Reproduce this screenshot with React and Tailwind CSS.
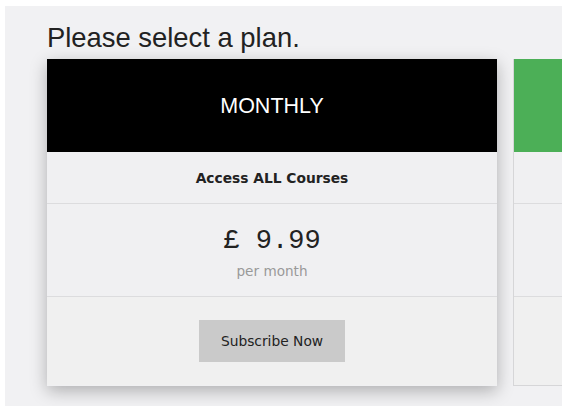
export default function App() {
  const Card = ({ featured, color, title }) => (
    <div
      className={
        "w-[450px] shrink-0 flex flex-col bg-[#f0f0f2] " +
        (featured
          ? "shadow-[0_5px_16px_rgba(0,0,0,0.28)]"
          : "border border-[#d6d6d8] border-t-0")
      }
    >
      <div
        className={
          "h-[93px] flex items-center justify-center text-white text-[21.5px] pt-[2px] font-['Liberation_Sans',Arial,sans-serif] " +
          color
        }
      >
        {title}
      </div>
      <div className="h-[52px] flex items-center justify-center pt-[2px] border-b border-[#dcdcde] font-['DejaVu_Sans',Verdana,sans-serif] font-bold text-[13.8px] text-[#222]">
        {featured ? "Access ALL Courses" : ""}
      </div>
      <div className="h-[93px] flex flex-col items-center justify-center border-b border-[#dcdcde]">
        {featured && (
          <>
            <div className="font-['Liberation_Mono','Courier_New',monospace] text-[27px] leading-none text-[#222] mt-[10px]">
              £ 9.99
            </div>
            <div className="font-['DejaVu_Sans',Verdana,sans-serif] text-[13.6px] text-[#999] mt-[6px]">
              per month
            </div>
          </>
        )}
      </div>
      <div className="h-[88px] flex items-center justify-center bg-[#f0f0f0]">
        {featured && (
          <button className="w-[146px] h-[42px] bg-[#cacaca] font-['DejaVu_Sans',Verdana,sans-serif] text-[13.8px] text-[#222]">
            Subscribe Now
          </button>
        )}
      </div>
    </div>
  );

  return (
    <div className="bg-white h-[415px] w-[569px] pt-[6px] pl-[5px]">
      <div className="w-[557px] h-[400px] bg-[#f1f1f3] overflow-hidden pl-[42px] pt-[16px]">
        <h1 className="font-['Liberation_Sans',Arial,sans-serif] text-[27.4px] leading-[31px] text-[#222]">
          Please select a plan.
        </h1>
        <div className="flex gap-[16px] mt-[6px]">
          <Card featured color="bg-black" title="MONTHLY" />
          <Card color="bg-[#4caf57]" title="" />
        </div>
      </div>
    </div>
  );
}
